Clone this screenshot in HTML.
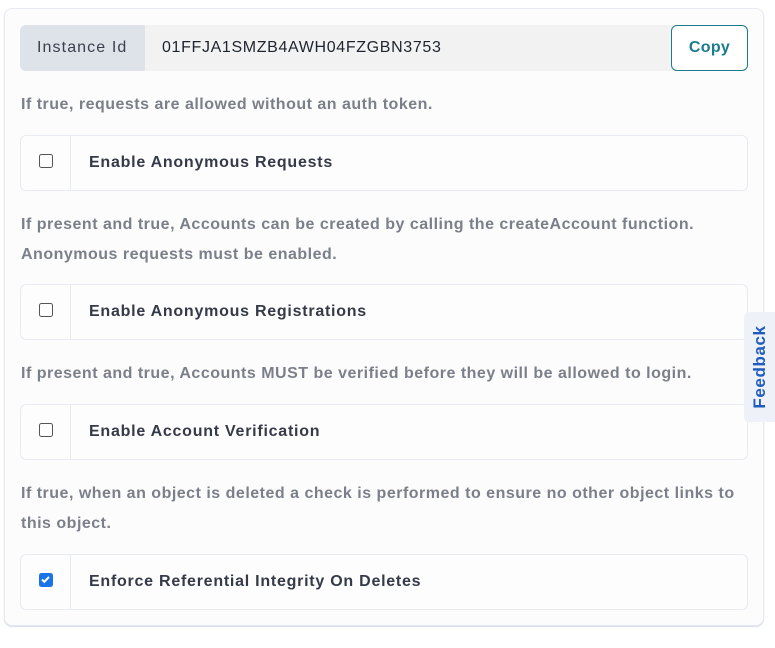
<!DOCTYPE html>
<html><head><style>
*{box-sizing:border-box;margin:0;padding:0}
body{width:775px;height:648px;background:#fff;font-family:"Liberation Sans",sans-serif;position:relative;overflow:hidden}
.card{position:absolute;left:4px;top:8px;width:760px;height:618px;background:#fcfcfd;border:1px solid #e6e9ef;border-radius:8px;box-shadow:0 1px 1px #d5dae3}
.inst{position:absolute;left:20px;top:25px;width:728px;height:46px;border-radius:6px;background:#f2f2f2;overflow:hidden}
.lab{position:absolute;left:0;top:0;width:125px;height:46px;background:#dee3ea;color:#3a3f4b;font-size:16px;line-height:46px;padding-left:17px;letter-spacing:1.1px}
.val{position:absolute;left:142px;top:0;line-height:46px;font-size:16px;color:#1e2430;letter-spacing:0.65px}
.copy{position:absolute;left:671px;top:25px;width:77px;height:46px;border:1px solid #1b7c8c;border-radius:6px;background:#fff;color:#1b7c8c;font-weight:bold;font-size:16px;text-align:center;line-height:44px;letter-spacing:0.3px}
.t{position:absolute;left:21px;font-size:16px;font-weight:bold;color:#7b7f89;line-height:30px;letter-spacing:0.5px}
.row{position:absolute;left:20px;width:728px;height:56px;border:1px solid #e8ebf0;border-radius:6px;background:#fdfdfe}
.row .div{position:absolute;left:49px;top:0;bottom:0;border-left:1px solid #e8ebf0}
.cb{position:absolute;left:18px;top:18px;width:14px;height:14px;border:1.5px solid #555;border-radius:2.5px;background:#fff}
.cb.on{background:#1a73e8;border-color:#1a73e8}
.row span{position:absolute;left:68px;top:0;line-height:54px;font-size:16px;font-weight:bold;color:#353a48;letter-spacing:0.75px}
.fb{position:absolute;left:744px;top:312px;width:31px;height:110px;background:#eef2f8;border-radius:5px 0 0 5px}
.fb span{position:absolute;left:50%;top:50%;transform:translate(-50%,-50%) rotate(-90deg);color:#1f5cbf;font-weight:bold;font-size:17px;letter-spacing:0.6px;white-space:nowrap}
</style></head><body>
<div class="card"></div>
<div class="inst"><div class="lab">Instance Id</div><div class="val">01FFJA1SMZB4AWH04FZGBN3753</div></div>
<div class="copy">Copy</div>
<div class="t" style="top:90px">If true, requests are allowed without an auth token.</div>
<div class="row" style="top:135px"><div class="div"></div><div class="cb"></div><span>Enable Anonymous Requests</span></div>
<div class="t" style="top:210px">If present and true, Accounts can be created by calling the createAccount function.<br>Anonymous requests must be enabled.</div>
<div class="row" style="top:284px"><div class="div"></div><div class="cb"></div><span>Enable Anonymous Registrations</span></div>
<div class="t" style="top:359px">If present and true, Accounts MUST be verified before they will be allowed to login.</div>
<div class="row" style="top:404px"><div class="div"></div><div class="cb"></div><span>Enable Account Verification</span></div>
<div class="t" style="top:479px">If true, when an object is deleted a check is performed to ensure no other object links to<br>this object.</div>
<div class="row" style="top:554px"><div class="div"></div><div class="cb on"><svg width="11" height="11" viewBox="0 0 11 11" style="position:absolute;left:0;top:0"><path d="M2 5.5l2.3 2.3L9 3" stroke="#fff" stroke-width="2" fill="none"/></svg></div><span>Enforce Referential Integrity On Deletes</span></div>
<div class="fb"><span>Feedback</span></div>
</body></html>
